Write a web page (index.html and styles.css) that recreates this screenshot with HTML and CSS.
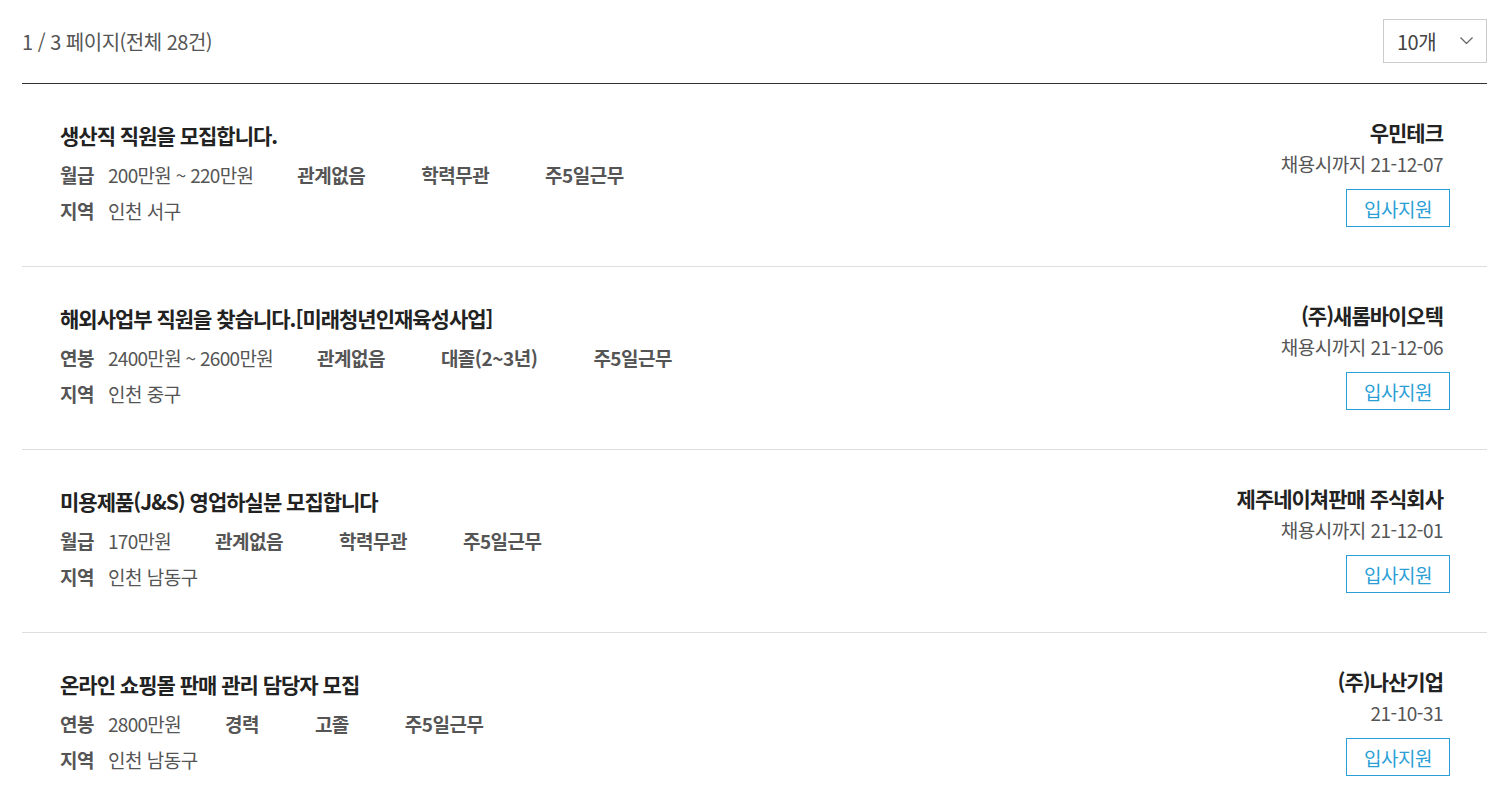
FILE: index.html
```html
<!DOCTYPE html>
<html lang="ko">
<head>
  <meta charset="UTF-8" />
  <meta name="viewport" content="width=device-width, initial-scale=1.0"/>
  <title>채용정보 목록</title>
  <link rel="stylesheet" href="styles.css">
</head>
<body>

<div class="board">
  <div class="board-top">
    <p class="page-info">1 / 3 페이지(전체 28건)</p>
    <div class="page-size">
      <span>10개</span>
      <svg class="chev" width="13" height="7" viewBox="0 0 13 7" aria-hidden="true">
        <path d="M0.5 0.5 L6.5 6.5 L12.5 0.5" fill="none" stroke="#666" stroke-width="1.3"/>
      </svg>
    </div>
  </div>

  <ul class="job-list">
    <li class="job">
      <div class="job-main">
        <h3 class="job-title">생산직 직원을 모집합니다.</h3>
        <div class="job-line">
          <b>월급</b><span class="pay">200만원 ~ 220만원</span>
          <span class="tags"><b>관계없음</b><b>학력무관</b><b>주5일근무</b></span>
        </div>
        <div class="job-line"><b>지역</b><span>인천 서구</span></div>
      </div>
      <div class="job-side">
        <strong class="company">우민테크</strong>
        <span class="deadline">채용시까지 21-12-07</span>
        <a class="apply" href="#">입사지원</a>
      </div>
    </li>

    <li class="job">
      <div class="job-main">
        <h3 class="job-title">해외사업부 직원을 찾습니다.[미래청년인재육성사업]</h3>
        <div class="job-line">
          <b>연봉</b><span class="pay">2400만원 ~ 2600만원</span>
          <span class="tags"><b>관계없음</b><b>대졸(2~3년)</b><b>주5일근무</b></span>
        </div>
        <div class="job-line"><b>지역</b><span>인천 중구</span></div>
      </div>
      <div class="job-side">
        <strong class="company">(주)새롬바이오텍</strong>
        <span class="deadline">채용시까지 21-12-06</span>
        <a class="apply" href="#">입사지원</a>
      </div>
    </li>

    <li class="job">
      <div class="job-main">
        <h3 class="job-title">미용제품(J&amp;S) 영업하실분 모집합니다</h3>
        <div class="job-line">
          <b>월급</b><span class="pay">170만원</span>
          <span class="tags"><b>관계없음</b><b>학력무관</b><b>주5일근무</b></span>
        </div>
        <div class="job-line"><b>지역</b><span>인천 남동구</span></div>
      </div>
      <div class="job-side">
        <strong class="company">제주네이쳐판매 주식회사</strong>
        <span class="deadline">채용시까지 21-12-01</span>
        <a class="apply" href="#">입사지원</a>
      </div>
    </li>

    <li class="job">
      <div class="job-main">
        <h3 class="job-title">온라인 쇼핑몰 판매 관리 담당자 모집</h3>
        <div class="job-line">
          <b>연봉</b><span class="pay">2800만원</span>
          <span class="tags"><b>경력</b><b>고졸</b><b>주5일근무</b></span>
        </div>
        <div class="job-line"><b>지역</b><span>인천 남동구</span></div>
      </div>
      <div class="job-side">
        <strong class="company">(주)나산기업</strong>
        <span class="deadline">21-10-31</span>
        <a class="apply" href="#">입사지원</a>
      </div>
    </li>
  </ul>
</div>

</body>
</html>
```

FILE: styles.css
```css
body {
  margin: 0;
  background: #fff;
  color: #555;
  font-family: "Noto Sans CJK KR", "Noto Sans", sans-serif;
  letter-spacing: -0.5px;
}

.board {
  padding: 0 24px 0 22px;
}

.board-top {
  display: flex;
  justify-content: space-between;
  align-items: center;
  padding: 19px 0 20px;
  border-bottom: 1px solid #333;
}

.page-info {
  margin: 0;
  font-size: 20px;
  color: #555;
}

.page-size {
  width: 104px;
  height: 44px;
  box-sizing: border-box;
  border: 1px solid #ccc;
  display: flex;
  align-items: center;
  justify-content: space-between;
  padding: 0 13px 0 13px;
  font-size: 20px;
  color: #444;
}

.chev {
  margin-top: -2px;
}

.job-list {
  list-style: none;
  margin: 0;
  padding: 0;
}

.job {
  display: flex;
  justify-content: space-between;
  border-bottom: 1px solid #ddd;
  height: 182px;
}

.job:last-child {
  border-bottom: none;
}

.job-main {
  padding: 36px 0 0 38px;
}

.job-title {
  margin: 0 0 7px;
  font-size: 21px;
  line-height: 30px;
  letter-spacing: -1px;
  font-weight: 700;
  color: #222;
}

.job-line {
  display: flex;
  align-items: center;
  font-size: 19px;
  line-height: 36px;
}

.job-line b {
  font-weight: 700;
  color: #555;
  margin-right: 14px;
}

.pay {
  letter-spacing: -0.7px;
}

.tags {
  display: flex;
  gap: 56px;
  margin-left: 44px;
}

.tags b {
  margin-right: 0;
}

.job-side {
  display: flex;
  flex-direction: column;
  align-items: flex-end;
  padding: 33px 37px 0 0;
}

.company {
  font-size: 21px;
  line-height: 30px;
  letter-spacing: -1px;
  font-weight: 700;
  color: #222;
  margin-right: 7px;
}

.deadline {
  font-size: 19px;
  line-height: 30px;
  margin: 2px 7px 0 0;
  color: #555;
}

.apply {
  margin-top: 10px;
  width: 104px;
  height: 38px;
  box-sizing: border-box;
  border: 1px solid #2a9fd6;
  color: #2a9fd6;
  font-size: 19px;
  text-decoration: none;
  display: flex;
  align-items: center;
  justify-content: center;
}
```
